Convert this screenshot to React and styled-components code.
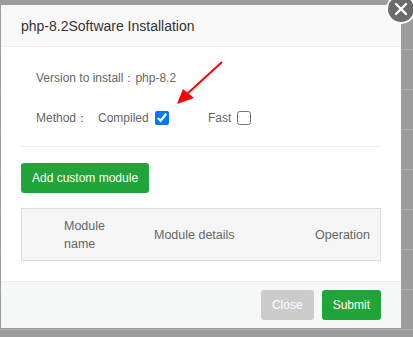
import React from 'react'
import styled, { createGlobalStyle } from 'styled-components'

const Global = createGlobalStyle`
    body {
        margin: 0;
        font-family: 'Liberation Sans', Arial, sans-serif;
        background-color: #9c9c9c;
        background-image: linear-gradient(
            to bottom,
            #b0b0b0 0px,
            #b0b0b0 1px,
            transparent 1px
        );
        background-size: 100% 40px;
        background-position: 0 9px;
    }
`

const Page = styled.div`
    width: 413px;
    height: 337px;
    padding: 5px 0 0 1px;
    box-sizing: border-box;
    overflow: hidden;
`

const Dialog = styled.div`
    position: relative;
    width: 400px;
    height: 323px;
    background: #fff;
    display: flex;
    flex-direction: column;
`

const Header = styled.div`
    height: 41px;
    background: #f8f8f8;
    border-bottom: 1px solid #eee;
    display: flex;
    align-items: center;
    padding-left: 20px;
    font-size: 14px;
    color: #333;
`

const CloseIcon = styled.div`
    position: absolute;
    top: -11px;
    right: -15px;
    width: 26px;
    height: 26px;
    border-radius: 50%;
    background: #6b6b6b;
    border: 2px solid #fff;
    display: flex;
    align-items: center;
    justify-content: center;
`

const Body = styled.div`
    flex: 1;
    padding: 0 20px;
`

const Info = styled.div`
    padding: 23px 15px 0;
    font-size: 12px;
    color: #666;
    border-bottom: 1px solid #eee;
    height: 100px;
    box-sizing: border-box;
    position: relative;
`

const Line = styled.div`
    display: flex;
    align-items: center;
    height: 16px;
    margin-top: ${p => p.gap || 0}px;
`

const Label = styled.span`
    width: ${p => p.w}px;
    display: inline-flex;
    align-items: center;
`

const Check = styled.input`
    width: 14px;
    height: 14px;
    margin: 0 0 0 6px;
`

const Arrow = styled.svg`
    position: absolute;
    left: 150px;
    top: 14px;
`

const Green = styled.button`
    height: 30px;
    border: none;
    border-radius: 3px;
    background: #20a53a;
    color: #fff;
    font-family: inherit;
    font-size: 12px;
    padding: 0 11px;
`

const Tools = styled.div`
    padding-top: 16px;
`

const Table = styled.div`
    margin-top: 15px;
    height: 53px;
    background: #f5f5f5;
    border: 1px solid #ddd;
    box-sizing: border-box;
    display: grid;
    grid-template-columns: 42px 90px 1fr auto;
    align-items: center;
    font-size: 12.5px;
    color: #666;
    line-height: 18px;
    padding-right: 10px;
`

const Footer = styled.div`
    height: 45px;
    border-top: 1px solid #eee;
    background: #f6f7f7;
    display: flex;
    justify-content: flex-end;
    align-items: center;
    gap: 8px;
    padding: 0 20px 1px;
`

const Gray = styled(Green)`
    background: #ccc;
`

export default function App() {
    return (
        <Page>
            <Global />
            <Dialog>
                <Header>php-8.2Software Installation</Header>
                <CloseIcon>
                    <svg width="14" height="14" viewBox="0 0 14 14">
                        <path d="M2 2 L12 12 M12 2 L2 12" stroke="#fff" strokeWidth="2.4" strokeLinecap="round" />
                    </svg>
                </CloseIcon>
                <Body>
                    <Info>
                        <Line>Version to install：php-8.2</Line>
                        <Line gap={24}>
                            <Label w={62}>Method：</Label>
                            <Label w={110}>Compiled<Check type="checkbox" defaultChecked /></Label>
                            <Label>Fast<Check type="checkbox" /></Label>
                        </Line>
                        <Arrow width="60" height="50" viewBox="0 0 60 50">
                            <path d="M51 1 L16 33" stroke="#f00" strokeWidth="2" />
                            <polygon points="6,43 12,28 23,37" fill="#f00" />
                        </Arrow>
                    </Info>
                    <Tools>
                        <Green>Add custom module</Green>
                    </Tools>
                    <Table>
                        <span />
                        <span>Module<br />name</span>
                        <span>Module details</span>
                        <span>Operation</span>
                    </Table>
                </Body>
                <Footer>
                    <Gray>Close</Gray>
                    <Green>Submit</Green>
                </Footer>
            </Dialog>
        </Page>
    )
}
